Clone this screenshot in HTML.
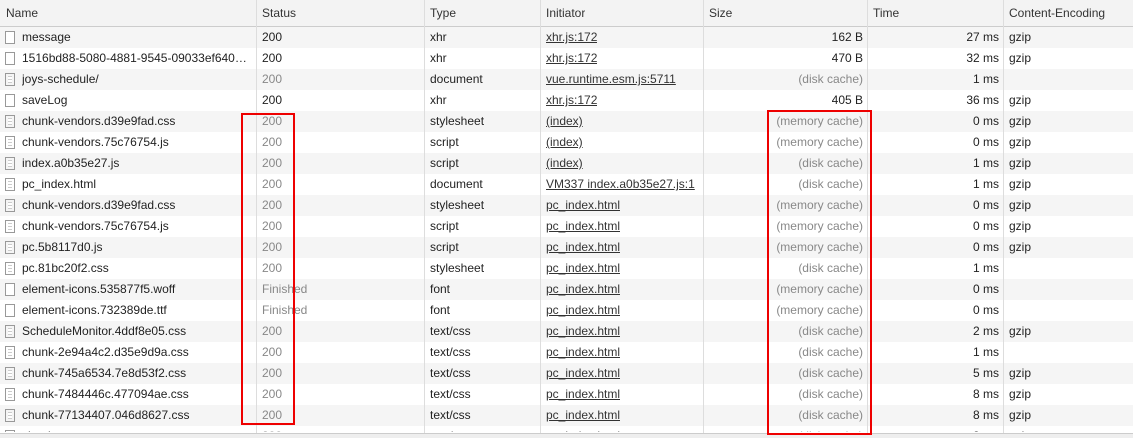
<!DOCTYPE html><html><head><style>
body{margin:0;width:1133px;height:437px;overflow:hidden;background:#fff;font-family:"Liberation Sans",sans-serif;font-size:12px;color:#222;position:relative}
.hd{position:absolute;left:0;top:0;width:1133px;height:26px;background:#f3f3f3;border-bottom:1px solid #ccc}
.r{position:absolute;left:0;width:1133px;height:21px;line-height:21px}
.g{background:#f5f5f5}
.c{position:absolute;top:0;white-space:nowrap;overflow:hidden}
.vl{position:absolute;top:0;width:1px;height:433px;background:#ddd}
.gr{color:#888}
u{color:#333}
.ic{position:absolute;left:5px;top:4px;width:10px;height:13px;border:1px solid #999;background:#fff;box-sizing:border-box}
.ic.t{background:repeating-linear-gradient(#fff 0 2px,#ccc 2px 3px);background-clip:content-box;padding:2px}
.box{position:absolute;border:2px solid #e00}
</style></head><body>
<div class="hd"></div>
<div style="position:absolute;top:0;left:0;height:26px;line-height:26px;width:1133px;color:#333">
<span class="c" style="left:6px">Name</span><span class="c" style="left:262px">Status</span><span class="c" style="left:430px">Type</span><span class="c" style="left:546px">Initiator</span><span class="c" style="left:709px">Size</span><span class="c" style="left:873px">Time</span><span class="c" style="left:1009px">Content-Encoding</span></div>
<div style="position:absolute;top:433px;left:0;width:1133px;height:4px;background:#eee;border-top:1px solid #ccc"></div>
<div id="rows"></div>
<div class="vl" style="left:256px"></div><div class="vl" style="left:424px"></div><div class="vl" style="left:540px"></div><div class="vl" style="left:703px"></div><div class="vl" style="left:867px"></div><div class="vl" style="left:1003px"></div>
<div class="box" style="left:241px;top:113px;width:50px;height:308px"></div>
<div class="box" style="left:767px;top:110px;width:101px;height:321px"></div>
<script>
var d=[
["message","200","xhr","xhr.js:172","162 B","27 ms","gzip",0,0],
["1516bd88-5080-4881-9545-09033ef640…","200","xhr","xhr.js:172","470 B","32 ms","gzip",0,0],
["joys-schedule/","200","document","vue.runtime.esm.js:5711","(disk cache)","1 ms","",1,1],
["saveLog","200","xhr","xhr.js:172","405 B","36 ms","gzip",0,0],
["chunk-vendors.d39e9fad.css","200","stylesheet","(index)","(memory cache)","0 ms","gzip",1,1],
["chunk-vendors.75c76754.js","200","script","(index)","(memory cache)","0 ms","gzip",1,1],
["index.a0b35e27.js","200","script","(index)","(disk cache)","1 ms","gzip",1,1],
["pc_index.html","200","document","VM337 index.a0b35e27.js:1","(disk cache)","1 ms","gzip",1,1],
["chunk-vendors.d39e9fad.css","200","stylesheet","pc_index.html","(memory cache)","0 ms","gzip",1,1],
["chunk-vendors.75c76754.js","200","script","pc_index.html","(memory cache)","0 ms","gzip",1,1],
["pc.5b8117d0.js","200","script","pc_index.html","(memory cache)","0 ms","gzip",1,1],
["pc.81bc20f2.css","200","stylesheet","pc_index.html","(disk cache)","1 ms","",1,1],
["element-icons.535877f5.woff","Finished","font","pc_index.html","(memory cache)","0 ms","",1,0],
["element-icons.732389de.ttf","Finished","font","pc_index.html","(memory cache)","0 ms","",1,0],
["ScheduleMonitor.4ddf8e05.css","200","text/css","pc_index.html","(disk cache)","2 ms","gzip",1,1],
["chunk-2e94a4c2.d35e9d9a.css","200","text/css","pc_index.html","(disk cache)","1 ms","",1,1],
["chunk-745a6534.7e8d53f2.css","200","text/css","pc_index.html","(disk cache)","5 ms","gzip",1,1],
["chunk-7484446c.477094ae.css","200","text/css","pc_index.html","(disk cache)","8 ms","gzip",1,1],
["chunk-77134407.046d8627.css","200","text/css","pc_index.html","(disk cache)","8 ms","gzip",1,1],
["chunk-xxxxxxxx.xxxxxxxx.css","200","text/css","pc_index.html","(disk cache)","8 ms","gzip",1,1]];
var h="";d.forEach(function(r,i){var y=27+21*i;var g=r[7]?" gr":"";
h+='<div class="r'+(i%2==0?' g':'')+'" style="top:'+y+'px;'+(i==19?'height:6px;overflow:hidden':'')+'"><div class="ic'+(r[8]?' t':'')+'"></div>'+
'<span class="c" style="left:22px;width:232px">'+r[0]+'</span><span class="c'+g+'" style="left:262px">'+r[1]+'</span><span class="c" style="left:430px">'+r[2]+'</span><span class="c" style="left:546px"><u>'+r[3]+'</u></span><span class="c'+(r[4][0]=='('?' gr':'')+'" style="right:'+(1133-863)+'px">'+r[4]+'</span><span class="c" style="right:'+(1133-999)+'px">'+r[5]+'</span><span class="c" style="left:1009px">'+r[6]+'</span></div>';});
document.getElementById("rows").innerHTML=h;
</script>
</body></html>
